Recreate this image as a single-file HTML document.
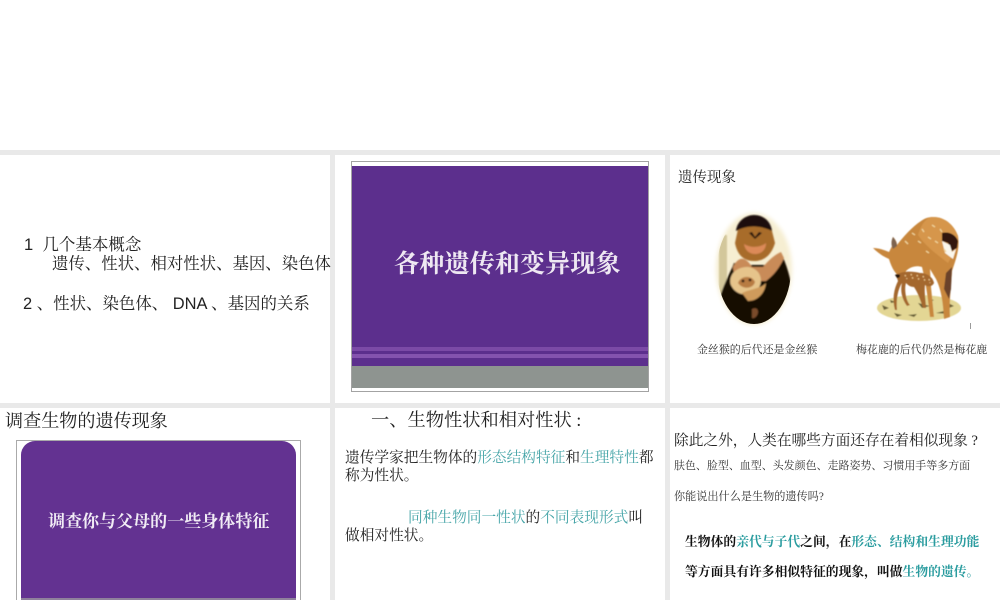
<!DOCTYPE html>
<html lang="zh">
<head>
<meta charset="utf-8">
<style>
html,body{margin:0;padding:0;background:#fff}
#p{position:relative;width:1000px;height:600px;overflow:hidden;background:#fff;font-family:"Liberation Serif","Noto Serif CJK SC",serif;color:#222}
.g{position:absolute;background:#e9e9e9}
.t{position:absolute;white-space:nowrap;line-height:1;filter:blur(.3px)}
.s{font-family:"Liberation Sans","Noto Serif CJK SC",sans-serif}
.c{color:#46a5a8}
.d{color:#2a9c9f}
b{font-weight:700}
</style>
</head>
<body>
<div id="p">
<div class="g" style="left:0;top:150px;width:1000px;height:5px"></div>
<div class="g" style="left:0;top:403px;width:1000px;height:5px"></div>
<div class="g" style="left:330px;top:155px;width:5px;height:445px"></div>
<div class="g" style="left:665px;top:155px;width:5px;height:445px"></div>

<div class="t s" style="left:24px;top:237px;font-size:16.5px">1&nbsp; 几个基本概念</div>
<div class="t s" style="left:52px;top:256px;font-size:16.42px">遗传、性状、相对性状、基因、染色体</div>
<div class="t s" style="left:23px;top:296px;font-size:16.45px">2 、性状、染色体、 DNA 、基因的关系</div>

<div style="position:absolute;left:351px;top:161px;width:296px;height:229px;border:1px solid #a3a3a3;background:#fff"></div>
<div style="position:absolute;left:352px;top:166px;width:296px;height:200px;background:#5c2f8d"></div>
<div style="position:absolute;left:352px;top:346.5px;width:296px;height:4px;background:#7b4aa6"></div>
<div style="position:absolute;left:352px;top:353.5px;width:296px;height:4.5px;background:#8453ae"></div>
<div style="position:absolute;left:352px;top:366px;width:296px;height:22px;background:#8e9490"></div>
<div class="t" style="left:394px;top:252px;font-size:25.2px;color:#eee8f2;font-weight:700">各种遗传和变异现象</div>

<div class="t" style="left:678px;top:171px;font-size:14.5px">遗传现象</div>

<svg style="position:absolute;left:700px;top:205px" width="110" height="125" viewBox="0 0 110 125">
<defs>
<filter id="b1" x="-20%" y="-20%" width="140%" height="140%"><feGaussianBlur stdDeviation="0.8"/></filter>
<filter id="b2" x="-20%" y="-20%" width="140%" height="140%"><feGaussianBlur stdDeviation="2"/></filter>
<clipPath id="ov"><ellipse cx="54" cy="64" rx="37" ry="55"/></clipPath>
</defs>
<ellipse cx="54" cy="64" rx="38" ry="56" fill="#f6eed2" filter="url(#b2)"/>
<g clip-path="url(#ov)"><g filter="url(#b1)">
<rect x="19" y="30" width="8" height="70" fill="#d3c79b"/>
<path d="M34 58C27 76 16 90 16 122H94C95 96 92 72 82 50L66 60 46 60Z" fill="#150a06"/>
<path d="M33 62C39 50 46 52 52 62L63 62C68 56 74 50 81 47L84 53C80 62 74 70 66 76L40 76C36 72 33 68 33 62Z" fill="#c98b58"/>
<path d="M38 24L40 18C45 12 62 12 68 20L72 26 75 38C72 48 66 56 54 56 42 56 37 48 35 38Z" fill="#a86c2a"/>
<path d="M36 26C37 16 46 10 54 10 64 10 71 17 72 26 60 20 47 20 36 26Z" fill="#1c110b"/>
<path d="M44 39C50 43 60 43 66 38 66 46 60 49 55 49 49 49 45 45 44 39Z" fill="#dc8a58"/>
<path d="M49 28l3-1 3 5 4-5 3 1-7 6z" fill="#1d100a"/>
<path d="M33 68C38 62 50 59 57 66 63 72 62 82 55 87 46 92 36 89 32 82 29 78 30 72 33 68Z" fill="#e6c48b"/>
<path d="M38 78C41 70 52 70 55 77 53 84 43 85 38 78Z" fill="#b87c43"/>
<circle cx="43" cy="76" r="1.4" fill="#1d100a"/><circle cx="50" cy="75" r="1.4" fill="#1d100a"/>
<path d="M42 88C50 84 60 84 66 78 65 88 58 96 48 96Z" fill="#cf9b5c"/>
<path d="M52 104c4-2 6 0 6 3s-3 7-6 6z" fill="#7a4c2a"/>
</g></g>
</svg>

<svg style="position:absolute;left:860px;top:205px" width="115" height="125" viewBox="0 0 115 125">
<defs><filter id="b3" x="-20%" y="-20%" width="140%" height="140%"><feGaussianBlur stdDeviation="0.6"/></filter></defs>
<g filter="url(#b3)">
<ellipse cx="59" cy="103" rx="42" ry="13" fill="#e3d694"/>
<path d="M22 100l7 3-5 2zM30 95l6 2-5 1zM34 108l8 2-5 2zM58 98l12 3-8 2zM76 108l8-2 4 3zM88 98l6 3-5 2zM48 110l9-1-3 3zM68 94l6 1-4 2z" fill="#6a6138"/>
<path d="M73 12C85 12 94 20 98 31 100 44 96 54 92 66 91 82 89 98 90 112L84 114C83 96 81 84 76 74L70 64 71 82 74 112 70 112C68 94 66 78 62 62 56 60 50 62 46 66L44 72 41 72C36 70 32 64 29 54 22 51 17 47 13 43 19 43 24 45 29 47L32 41C31 38 32 34 33 32 35 34 37 37 37 40 43 32 52 22 61 16 65 13 69 12 73 12Z" fill="#c8873c"/>
<path d="M73 12C85 12 94 20 98 31 99 45 92 50 88 58 78 50 66 42 58 30 61 20 66 12 73 12Z" fill="#d6964c"/>
<path d="M33 32C35 34 37 38 37 41L33 44C31 40 31 36 33 32Z" fill="#7d6350"/>
<path d="M82 28C89 26 96 30 98 36L97 43 92 46 88 38 82 36Z" fill="#33190e"/>
<path d="M82 36L90 40 92 47 96 44 93 54 85 48Z" fill="#fbf7ec"/>
<path d="M86 68L92 62 91 84 89 94 84 84Z" fill="#6b4329"/>
<path d="M36 70C42 66 52 66 60 68 67 68 73 72 74 78 72 82 68 82 65 80 64 88 66 96 66 103L63 103C60 94 58 88 54 82 50 82 48 80 46 78 44 84 46 96 50 100L47 101C42 94 40 86 42 78 38 84 36 94 37 105L35 105C32 94 34 84 38 76Z" fill="#a4682e"/>
<path d="M45 70l2 4M51 69l2 5M57 70l2 5M63 71l2 5M69 74l1 4" stroke="#edc98e" stroke-width="1.3" stroke-dasharray="1.5 2"/>
<path d="M40 70c-2-1-4-1-5 0l2 3c2 0 3-1 3-3z" fill="#261809"/>
<path d="M45 36l3 3M52 28l3 2M62 24l2 3M72 20l3 2M68 32l3 2M80 24l2 3M58 36l3 2M75 36l3 2M84 44l2 3M66 46l3 2" stroke="#f0d59e" stroke-width="1.3"/>
</g>
</svg>
<div style="position:absolute;left:970px;top:323px;width:1px;height:6px;background:#9a9a9a"></div>

<div class="t" style="left:697px;top:345px;font-size:10.95px;color:#333">金丝猴的后代还是金丝猴</div>
<div class="t" style="left:856px;top:345px;font-size:10.95px;color:#333">梅花鹿的后代仍然是梅花鹿</div>

<div class="t" style="left:5px;top:412px;font-size:18.1px">调查生物的遗传现象</div>
<div style="position:absolute;left:16px;top:440px;width:283px;height:170px;border:1px solid #aaa;background:#fff"></div>
<div style="position:absolute;left:21px;top:441px;width:275px;height:157px;background:#633291;border-radius:14px 14px 0 0"></div>
<div style="position:absolute;left:21px;top:598px;width:275px;height:2px;background:#8f819c"></div>
<div class="t" style="left:48px;top:513px;font-size:17.05px;color:#f1ecf5;font-weight:700">调查你与父母的一些身体特征</div>

<div class="t" style="left:371px;top:411px;font-size:18.25px">一、生物性状和相对性状 :</div>
<div class="t" style="left:345px;top:451px;font-size:14.7px">遗传学家把生物体的<span class="c">形态结构特征</span>和<span class="c">生理特性</span>都</div>
<div class="t" style="left:345px;top:469px;font-size:14.7px">称为性状。</div>
<div class="t" style="left:408px;top:511px;font-size:14.7px"><span class="c">同种生物同一性状</span>的<span class="c">不同表现形式</span>叫</div>
<div class="t" style="left:345px;top:529px;font-size:14.7px">做相对性状。</div>

<div class="t" style="left:674px;top:434px;font-size:14.7px">除此之外，人类在哪些方面还存在着相似现象 ?</div>
<div class="t" style="left:674px;top:461px;font-size:10.98px;color:#333">肤色、脸型、血型、头发颜色、走路姿势、习惯用手等多方面</div>
<div class="t" style="left:674px;top:492px;font-size:11.15px;color:#333">你能说出什么是生物的遗传吗?</div>
<div class="t" style="left:685px;top:536px;font-size:12.8px;color:#111"><b>生物体的<span class="d">亲代与子代</span>之间，在<span class="d">形态、结构和生理功能</span></b></div>
<div class="t" style="left:685px;top:566px;font-size:12.8px;color:#111"><b>等方面具有许多相似特征的现象，叫做<span class="d">生物的遗传。</span></b></div>
</div>
</body>
</html>
